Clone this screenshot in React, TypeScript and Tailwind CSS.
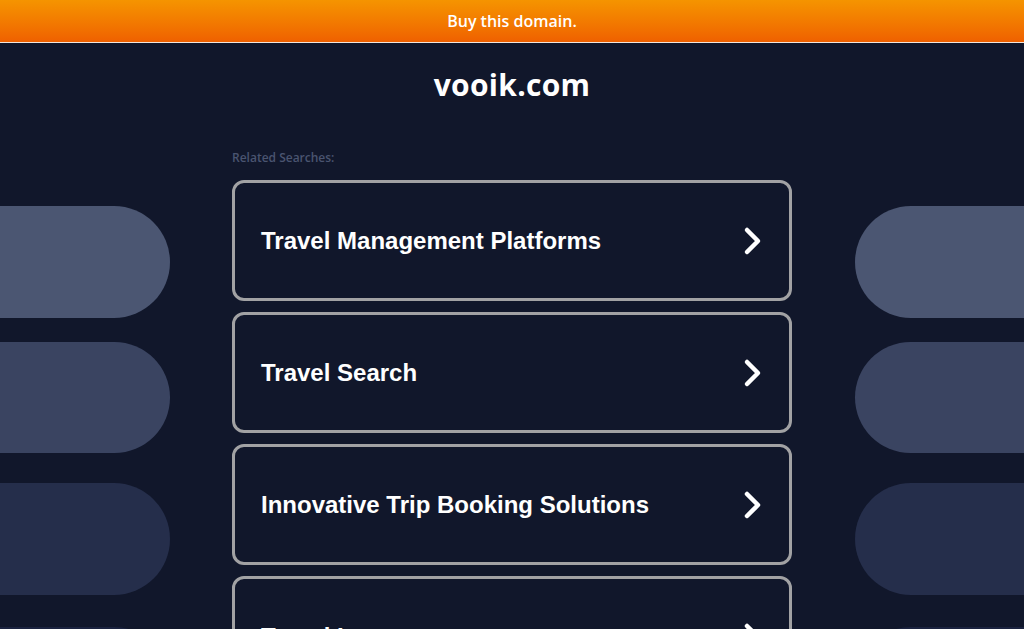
import React from "react";

const items = [
  "Travel Management Platforms",
  "Travel Search",
  "Innovative Trip Booking Solutions",
  "Travel Insurance",
];

function Chevron() {
  return (
    <svg width="22" height="32" viewBox="0 0 22 32" className="shrink-0">
      <polyline
        points="6,5 17,16 6,27"
        fill="none"
        stroke="#ffffff"
        strokeWidth="4.5"
        strokeLinecap="round"
        strokeLinejoin="round"
      />
    </svg>
  );
}

function Pills({ side }: { side: "left" | "right" }) {
  const round = side === "left" ? "rounded-r-[56px]" : "rounded-l-[56px]";
  return (
    <div className="flex flex-col pt-[83px]">
      <div className={`h-[112px] bg-[#4b5672] ${round}`} />
      <div className={`mt-[24px] h-[111px] bg-[#3a4461] ${round}`} />
      <div className={`mt-[30px] h-[112px] bg-[#252e4b] ${round}`} />
      <div className={`mt-[32px] h-[112px] bg-[#1b2340] ${round}`} />
    </div>
  );
}

export default function App() {
  return (
    <div
      className="h-[629px] w-[1024px] overflow-hidden bg-[#11172b]"
      style={{ fontFamily: "Montserrat, 'Open Sans', Lato, sans-serif" }}
    >
      <div className="flex h-[42px] items-center justify-center bg-gradient-to-b from-[#f59400] to-[#ef6000] text-[16px] font-semibold text-white font-['Open_Sans',sans-serif]">
        Buy this domain.
      </div>
      <div className="h-[1px] bg-[#f3e6dc]" />
      <div className="flex h-[80px] items-center justify-center pt-[2px] text-[30px] font-bold text-white font-['Open_Sans',sans-serif] tracking-[0.3px]">
        vooik.com
      </div>
      <div className="flex">
        <div className="w-[170px]">
          <Pills side="left" />
        </div>
        <div className="w-[62px]" />
        <div className="w-[560px] pt-[26px]">
          <div className="h-[31px] text-[12px] font-semibold text-[#4a5470] font-['Open_Sans',sans-serif]">
            Related Searches:
          </div>
          <div className="flex flex-col gap-[11px]">
            {items.map((t) => (
              <div
                key={t}
                className="flex h-[121px] items-center justify-between rounded-[12px] border-[3px] border-[#a2a2a4] pl-[26px] pr-[26px]"
              >
                <span className="text-[24px] font-bold text-white font-['Liberation_Sans',Arial,sans-serif]">
                  {t}
                </span>
                <Chevron />
              </div>
            ))}
          </div>
        </div>
        <div className="flex-1" />
        <div className="w-[169px]">
          <Pills side="right" />
        </div>
      </div>
    </div>
  );
}
